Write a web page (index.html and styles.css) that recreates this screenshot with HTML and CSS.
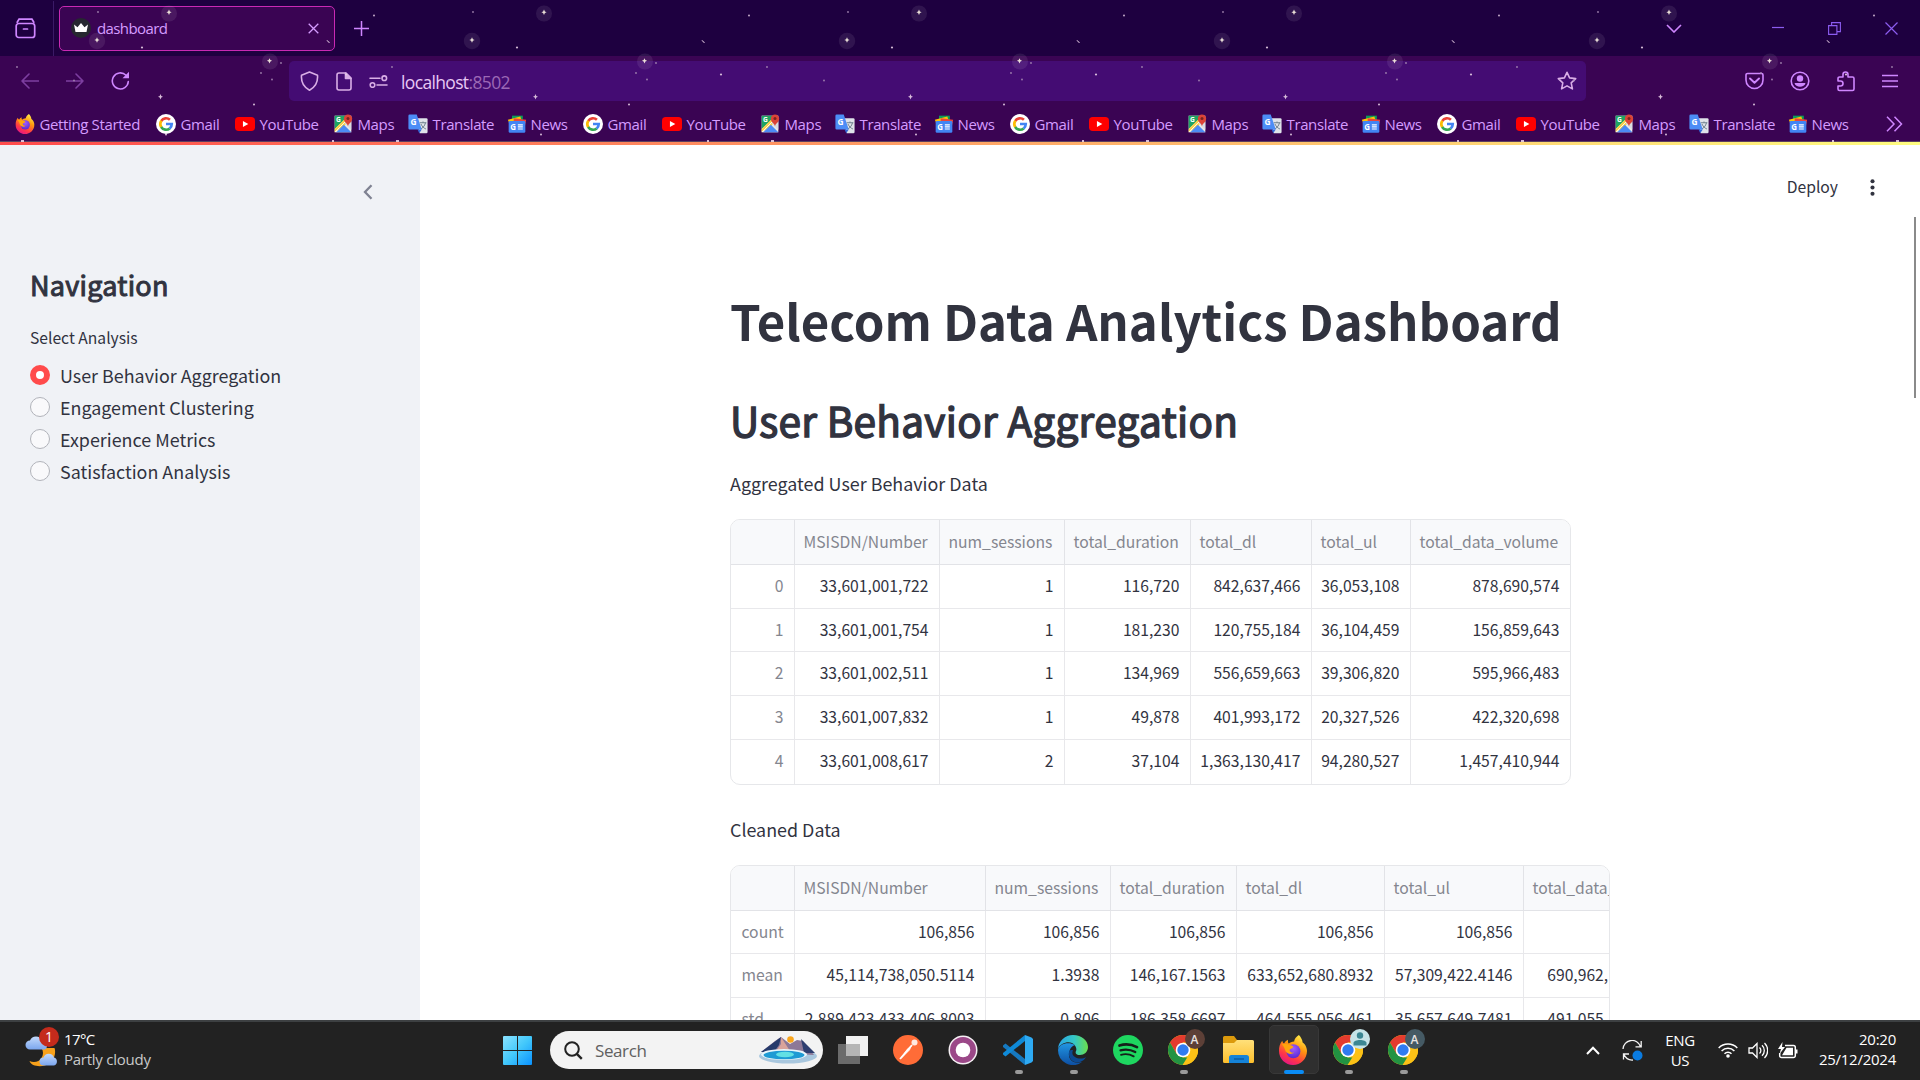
FILE: index.html
```html
<!DOCTYPE html>
<html lang="en">
<head>
<meta charset="utf-8">
<title>dashboard</title>
<link rel="stylesheet" href="styles.css">
</head>
<body>
<svg class="defs" width="0" height="0" aria-hidden="true">
  <defs>
    <linearGradient id="flame" x1="0.8" y1="0" x2="0.3" y2="1"><stop offset="0" stop-color="#fff44f"/><stop offset=".4" stop-color="#ff980e"/><stop offset=".75" stop-color="#ff3647"/><stop offset="1" stop-color="#e31587"/></linearGradient>
    <radialGradient id="globe" cx=".5" cy=".3" r=".7"><stop offset="0" stop-color="#a05bff"/><stop offset="1" stop-color="#5a2bd0"/></radialGradient>
    <linearGradient id="win" x1="0" y1="0" x2="1" y2="1"><stop offset="0" stop-color="#8be3ff"/><stop offset=".5" stop-color="#43c8fb"/><stop offset="1" stop-color="#0a92ff"/></linearGradient>
    <linearGradient id="edgeA" x1="0" y1=".4" x2="1" y2=".4"><stop offset="0" stop-color="#2aa5e6"/><stop offset=".55" stop-color="#35c8c5"/><stop offset="1" stop-color="#6be04b"/></linearGradient>
    <linearGradient id="edgeB" x1="0" y1="0" x2="0" y2="1"><stop offset="0" stop-color="#2196e3"/><stop offset="1" stop-color="#0d4fa3"/></linearGradient>
    <linearGradient id="fold" x1="0" y1="0" x2="0" y2="1"><stop offset="0" stop-color="#ffe07a"/><stop offset="1" stop-color="#fdbf2c"/></linearGradient>
    <linearGradient id="cloud" x1="0" y1="0" x2="0" y2="1"><stop offset="0" stop-color="#c3dafc"/><stop offset="1" stop-color="#7ba6ee"/></linearGradient>
    <pattern id="sky" width="375" height="142" patternUnits="userSpaceOnUse">
      <g fill="#ffffff" fill-opacity=".09"><circle cx="169" cy="13.5" r="8"/><circle cx="97" cy="41" r="8.2"/><circle cx="270" cy="61.500" r="8"/></g>
      <g fill="#fff6e6"><path d="M169 9.500l.9 2 1.700.8-1.700.8-.9 2-.9-2-1.700-.8 1.700-.8zM97 37.200l.9 2 1.700.8-1.700.8-.9 2-.9-2-1.700-.8 1.700-.8zM269.500 58.200l.9 1.800 1.700.8-1.700.8-.9 1.800-.9-1.800-1.700-.8 1.700-.8z"/></g>
      <g fill="#e7cfe6"><path d="M160.500 94l.8 2 1.700.8-1.700.8-.8 2-.8-2-1.700-.8 1.700-.8z"/><circle cx="142" cy="47.500" r="1.100"/><circle cx="374" cy="15.500" r=".9"/><path d="M327 40l3 2.500-1 .5-2.500-2.500z"/><circle cx="254" cy="104.500" r="1"/><circle cx="166" cy="134.500" r="1"/><circle cx="346" cy="74.500" r="1.100"/><rect x="21" y="140" width="3" height="2"/><rect x="332" y="140" width="2" height="2"/></g>
      <g fill="#a98bb5"><circle cx="98" cy="12" r=".9"/><circle cx="281" cy="63" r=".9"/><circle cx="17" cy="67" r=".9"/><circle cx="261" cy="73" r=".9"/><circle cx="272" cy="79.500" r=".9"/><circle cx="74" cy="80.500" r=".9"/></g>
    </pattern>
    <symbol id="firefox" viewBox="0 0 24 24"><path d="M22.500 9.500c-.5-1.600-1.800-3-2.800-3.600-.2-2.200-1.500-4.300-3-5.900-2.300 1.400-3.600 3.500-3.800 5.200-1.900.2-3.300.8-4.200 1.600-.8-.5-.9-1.500-.7-3-1.500.7-2.400 1.700-3 2.700-.6 0-1.300-.4-1.600-2C1.500 6.800.7 9.600.8 12.800.8 19 5.900 24 12 24s11.200-4.900 11.200-11.200c0-1.200-.3-2.300-.7-3.300z" fill="url(#flame)"/><circle cx="12.300" cy="13" r="5.600" fill="url(#globe)"/><path d="M3 7.500c2-.6 4.500-.4 6 .4 2 .2 3 .8 3.300 1.600-.5 1-2.300 1.200-3 2.200-.2 1.500 1.500 2.800 3.500 2.300-1.500 1.800-5 1.500-6.600-.8C5.300 11 5 9 3 7.500z" fill="#ffa50c"/></symbol>
    <symbol id="google" viewBox="0 0 24 24"><circle cx="12" cy="12" r="12" fill="#fff"/><g fill="none" stroke-width="3.200"><path d="M6.300 8.300A6.800 6.800 0 0 1 16.700 7" stroke="#ea4335"/><path d="M6.400 16A7 7 0 0 1 6.400 8.200" stroke="#fbbc05"/><path d="M16.500 17.300A6.900 6.900 0 0 1 6.200 15.600" stroke="#34a853"/><path d="M12 12h6.900a7 7 0 0 1-2.500 5.300" stroke="#4285f4"/></g></symbol>
    <symbol id="youtube" viewBox="0 0 24 24"><rect y="3.500" width="24" height="17" rx="4.500" fill="#f00"/><path d="M9.500 8.300v7.400L16 12z" fill="#fff"/></symbol>
    <symbol id="maps" viewBox="0 0 24 24"><path d="M2 2h20v20H2z" fill="#e8e8e8"/><path d="M2 2h17L2 18z" fill="#1fa463"/><path d="M2 22V18L18 2h3L14 14z" fill="#fbd14a"/><path d="M4 22l9-9 9 9z" fill="#4c8bf5"/><path d="M13 10l9 9V9z" fill="#d8dce2"/><path d="M2.500 21.500L19 5" stroke="#fff" stroke-width="1"/><text x="3.500" y="10" font-size="8" font-weight="700" fill="#fff" class="glyph">G</text><path d="M18 15c-.6-4-5-4.500-5-9.500a5 5 0 0 1 10 0c0 5-4.400 5.500-5 9.500z" fill="#db4437"/><circle cx="18" cy="5.500" r="1.800" fill="#7b231e"/></symbol>
    <symbol id="translate" viewBox="0 0 24 24"><path d="M10 5h12a1.500 1.500 0 0 1 1.500 1.500v15A1.500 1.500 0 0 1 22 23H14z" fill="#dfe3ea"/><path d="M14 10.500h8M18 9v1.500M21 10.500c-1 4-3.500 6.500-6 7.500M15.500 12c1.500 3 3.500 5 6 6" fill="none" stroke="#6d7f8d" stroke-width="1.200"/><path d="M11.500 18.500l5 0L13.500 23z" fill="#3367d6"/><path d="M2 .5h8.500L16.500 18.500H2A1.500 1.500 0 0 1 .5 17V2A1.500 1.500 0 0 1 2 .5z" fill="#4c8df6"/><text x="3" y="12.800" font-size="10" font-weight="700" fill="#fff" class="glyph">G</text></symbol>
    <symbol id="news" viewBox="0 0 24 24"><path d="M6 2h13v8H6z" fill="#0c9d58"/><path d="M1 7l15-4 2 7L4 14z" fill="#ffc107"/><path d="M8 5l15 2-2 10-13-2z" fill="#e8453c"/><rect x="2" y="8.500" width="20" height="14" rx="1.500" fill="#4285f4"/><text x="4" y="19" font-size="9.500" font-weight="700" fill="#fff" class="glyph">G</text><path d="M13 13h6M13 15.500h6M13 18h6" stroke="#fff" stroke-width="1.400"/></symbol>
    <symbol id="chrome" viewBox="0 0 30 30"><circle cx="15" cy="15" r="15" fill="#fbc116"/><path d="M15 0a15 15 0 0 1 13 7.500H15L8.500 18.700 2 7.500A15 15 0 0 1 15 0z" fill="#e33b2e"/><path d="M2 7.500l6.500 11.300h0L15 22.500h6.500L14.500 30A15 15 0 0 1 2 7.500z" fill="#229342"/><path d="M15 7.500h13A15 15 0 0 1 14.600 30l6.900-11.300z" fill="#fbc116"/><circle cx="15" cy="15" r="7.300" fill="#fff"/><circle cx="15" cy="15" r="5.700" fill="#2f7bf0"/></symbol>
  </defs>
</svg>

<header class="browser">
  <div class="tabstrip">
    <svg class="view-icon" width="21" height="21" viewBox="0 0 21 21" fill="none" stroke="#cf86ff" stroke-width="1.700" stroke-linecap="round"><path d="M4 1.200h13M2.200 4.200l1.800-3M18.800 4.200L17 1.200" /><rect x="1.200" y="5.500" width="18.500" height="14" rx="2.500"/><path d="M8.500 11h4"/></svg>
    <div class="tab">
      <svg width="20" height="20" viewBox="0 0 20 20"><circle cx="10" cy="10" r="10" fill="#262730"/><path d="M3 6.500l3.500 2.700L10 5l3.500 4.200L17 6.500 15.500 14h-11z" fill="#fff"/></svg>
      <span class="tab-title">dashboard</span>
      <svg width="11" height="11" viewBox="0 0 11 11" stroke="#d59cff" stroke-width="1.300"><path d="M.7.700l9.600 9.600M10.300.700L.700 10.300"/></svg>
    </div>
    <svg class="new-tab" width="15" height="15" viewBox="0 0 15 15" stroke="#cf86ff" stroke-width="1.500"><path d="M7.500 0v15M0 7.500h15"/></svg>
    <div class="window-controls">
      <svg width="16" height="9" viewBox="0 0 16 9" fill="none" stroke="#cf86ff" stroke-width="1.600"><path d="M1 1l7 7 7-7"/></svg>
      <svg class="min" width="12" height="13" viewBox="0 0 12 13" stroke="#8c5cf0" stroke-width="1.200"><path d="M0 5.500h12"/></svg>
      <svg class="restore" width="13" height="13" viewBox="0 0 13 13" fill="none" stroke="#8c5cf0" stroke-width="1.100"><path d="M.6 3.600h8.300v8.800H.6zM3.600 3.600v-3h8.800v9H9"/></svg>
      <svg class="close" width="13" height="13" viewBox="0 0 13 13" stroke="#8c5cf0" stroke-width="1.200"><path d="M.5.500l12 12M12.500.500l-12 12"/></svg>
    </div>
  </div>

  <div class="navbar">
    <div class="nav-buttons">
      <svg class="dim" width="18" height="16" viewBox="0 0 18 16"><path d="M17.500 8H1M8 1L1 8l7 7"/></svg>
      <svg class="dim" width="18" height="16" viewBox="0 0 18 16"><path d="M.5 8H17M10 1l7 7-7 7"/></svg>
      <svg width="20" height="20" viewBox="0 0 20 20"><path d="M17.300 10.500A8 8 0 1 1 15 4.300"/><path d="M18 .8v6.500H11.500z" fill="#cf86ff" stroke="none"/></svg>
    </div>
    <div class="urlbar">
      <svg class="shield" width="19" height="20" viewBox="0 0 19 20"><path d="M9.500 1L17.500 4.200c.6 7-2 12-8 15-6-3-8.600-8-8-15z"/></svg>
      <svg class="doc" width="16" height="19" viewBox="0 0 16 19"><path d="M3 1h7l5 5v10a2 2 0 0 1-2 2H3a2 2 0 0 1-2-2V3a2 2 0 0 1 2-2z"/><path d="M9.500 1v5.500H15z" fill="#d9aee6"/></svg>
      <svg class="perm" width="19" height="13" viewBox="0 0 19 13"><path d="M1 3.200h10M8 10h10"/><circle cx="15.300" cy="3.200" r="2.300"/><circle cx="3.500" cy="10" r="2.300"/></svg>
      <span class="url">localhost<span class="port">:8502</span></span>
      <svg class="star" width="20" height="20" viewBox="0 0 20 20"><path d="M10 1.300l2.600 5.600 6.100.7-4.500 4.200 1.200 6.100L10 14.900l-5.400 3 1.200-6.100L1.300 7.600l6.100-.7z"/></svg>
    </div>
    <div class="nav-tools">
      <svg width="19" height="18" viewBox="0 0 19 18"><path d="M2.500 1.500h14a1.500 1.500 0 0 1 1.500 1.500v5a8.500 8.500 0 0 1-17 0V3a1.500 1.500 0 0 1 1.500-1.500z"/><path d="M5 6.500l4.500 4.200L14 6.500" stroke-width="1.900"/></svg>
      <svg width="20" height="20" viewBox="0 0 20 20"><circle cx="10" cy="10" r="8.800"/><circle cx="10" cy="7.500" r="3.200" fill="#cf86ff" stroke="none"/><path d="M4.500 12h11c-1 5-10 5-11 0z" fill="#cf86ff" stroke="none"/></svg>
      <svg width="18" height="21" viewBox="0 0 18 21"><path d="M6 6V3.500a2.500 2.500 0 0 1 5 0V6h4.500A1.500 1.500 0 0 1 17 7.500V18a1.500 1.500 0 0 1-1.500 1.500h-13A1.500 1.500 0 0 1 1 18v-3h2.500a2.500 2.500 0 0 0 0-5H1V7.500A1.500 1.500 0 0 1 2.500 6z"/></svg>
      <svg width="16" height="14" viewBox="0 0 16 14"><path d="M0 1.500h16M0 7h16M0 12.500h16"/></svg>
    </div>
  </div>

  <nav class="bookmarks">
    <a class="bm bm-start"><svg><use href="#firefox"/></svg>Getting Started</a>
    <a class="bm bm-gmail"><svg><use href="#google"/></svg>Gmail</a><a class="bm bm-youtube"><svg><use href="#youtube"/></svg>YouTube</a><a class="bm bm-maps"><svg><use href="#maps"/></svg>Maps</a><a class="bm bm-translate"><svg><use href="#translate"/></svg>Translate</a><a class="bm bm-news"><svg><use href="#news"/></svg>News</a>
    <a class="bm bm-gmail"><svg><use href="#google"/></svg>Gmail</a><a class="bm bm-youtube"><svg><use href="#youtube"/></svg>YouTube</a><a class="bm bm-maps"><svg><use href="#maps"/></svg>Maps</a><a class="bm bm-translate"><svg><use href="#translate"/></svg>Translate</a><a class="bm bm-news"><svg><use href="#news"/></svg>News</a>
    <a class="bm bm-gmail"><svg><use href="#google"/></svg>Gmail</a><a class="bm bm-youtube"><svg><use href="#youtube"/></svg>YouTube</a><a class="bm bm-maps"><svg><use href="#maps"/></svg>Maps</a><a class="bm bm-translate"><svg><use href="#translate"/></svg>Translate</a><a class="bm bm-news"><svg><use href="#news"/></svg>News</a>
    <a class="bm bm-gmail"><svg><use href="#google"/></svg>Gmail</a><a class="bm bm-youtube"><svg><use href="#youtube"/></svg>YouTube</a><a class="bm bm-maps"><svg><use href="#maps"/></svg>Maps</a><a class="bm bm-translate"><svg><use href="#translate"/></svg>Translate</a><a class="bm bm-news"><svg><use href="#news"/></svg>News</a>
    <svg class="more" width="17" height="16" viewBox="0 0 17 16" fill="none" stroke="#cf86ff" stroke-width="1.500"><path d="M1 .8L8 8l-7 7.200M8.500.8l7 7.200-7 7.200"/></svg>
  </nav>
  <svg class="stars" width="1920" height="142"><rect width="1920" height="142" fill="url(#sky)"/></svg>
</header>
<div class="decoration"></div>

<div class="app">
  <aside class="sidebar">
    <svg class="collapse" width="10" height="16" viewBox="0 0 10 16" fill="none" stroke="#7f8292" stroke-width="2.300"><path d="M8.500 1.200L2 8l6.500 6.800"/></svg>
    <h2 class="side-title">Navigation</h2>
    <p class="side-label">Select Analysis</p>
    <ul class="radios">
      <li><span class="radio on"></span>User Behavior Aggregation</li>
      <li><span class="radio"></span>Engagement Clustering</li>
      <li><span class="radio"></span>Experience Metrics</li>
      <li><span class="radio"></span>Satisfaction Analysis</li>
    </ul>
  </aside>
  <main class="main">
    <div class="toolbar"><span>Deploy</span><svg width="5" height="17" viewBox="0 0 5 17" fill="#31333f"><circle cx="2.500" cy="2.300" r="2.050"/><circle cx="2.500" cy="8.500" r="2.050"/><circle cx="2.500" cy="14.700" r="2.050"/></svg></div>
    <div class="content">
      <h1 class="title">Telecom Data Analytics Dashboard</h1>
      <h2 class="heading">User Behavior Aggregation</h2>
      <p class="caption">Aggregated User Behavior Data</p>
      <div class="grid grid-agg">
        <div class="row head"><span></span><span>MSISDN/Number</span><span>num_sessions</span><span>total_duration</span><span>total_dl</span><span>total_ul</span><span>total_data_volume</span></div>
        <div class="row"><span>0</span><span>33,601,001,722</span><span>1</span><span>116,720</span><span>842,637,466</span><span>36,053,108</span><span>878,690,574</span></div>
        <div class="row"><span>1</span><span>33,601,001,754</span><span>1</span><span>181,230</span><span>120,755,184</span><span>36,104,459</span><span>156,859,643</span></div>
        <div class="row"><span>2</span><span>33,601,002,511</span><span>1</span><span>134,969</span><span>556,659,663</span><span>39,306,820</span><span>595,966,483</span></div>
        <div class="row"><span>3</span><span>33,601,007,832</span><span>1</span><span>49,878</span><span>401,993,172</span><span>20,327,526</span><span>422,320,698</span></div>
        <div class="row"><span>4</span><span>33,601,008,617</span><span>2</span><span>37,104</span><span>1,363,130,417</span><span>94,280,527</span><span>1,457,410,944</span></div>
      </div>
      <p class="caption">Cleaned Data</p>
      <div class="grid grid-clean">
        <div class="row head"><span></span><span>MSISDN/Number</span><span>num_sessions</span><span>total_duration</span><span>total_dl</span><span>total_ul</span><span>total_data_volume</span></div>
        <div class="row"><span>count</span><span>106,856</span><span>106,856</span><span>106,856</span><span>106,856</span><span>106,856</span><span>106,856</span></div>
        <div class="row"><span>mean</span><span>45,114,738,050.5114</span><span>1.3938</span><span>146,167.1563</span><span>633,652,680.8932</span><span>57,309,422.4146</span><span>690,962,103.3078</span></div>
        <div class="row"><span>std</span><span>2,889,423,433,406.8003</span><span>0.806</span><span>186,358.6697</span><span>464,555,056.461</span><span>35,657,649.7481</span><span>491,055,513.8236</span></div>
      </div>
    </div>
    <div class="scroll-thumb"></div>
  </main>
</div>

<footer class="taskbar">
  <div class="weather">
    <svg width="36" height="38" viewBox="0 0 36 38"><path d="M6.500 30c4 2 10 1 12-3 2-3 2-7 0-10h13c2 5-1 13-5 15-6 5-18 4-20-2z" fill="#f7a11b"/><path d="M7 18.500a4.500 4.500 0 0 1 0-9 6.500 6.500 0 0 1 12 0 5 5 0 0 1 3 9z" fill="url(#cloud)"/><path d="M20.500 34.500a4 4 0 0 1 0-8 5.500 5.500 0 0 1 10.500 0 4.200 4.200 0 0 1 0 8z" fill="url(#cloud)"/></svg>
    <span class="badge">1</span>
    <div class="weather-text"><span class="temp">17°C</span><span>Partly cloudy</span></div>
  </div>
  <svg class="start" width="29" height="29" viewBox="0 0 29 29" fill="url(#win)"><path d="M1 0h13v14H0V1a1 1 0 0 1 1-1zM15 0h13a1 1 0 0 1 1 1v13H15zM0 15h14v14H1a1 1 0 0 1-1-1zM15 15h14v13a1 1 0 0 1-1 1H15z"/></svg>
  <div class="search">
    <svg width="19" height="19" viewBox="0 0 19 19" fill="none" stroke="#222" stroke-width="2"><circle cx="8" cy="8" r="6.800"/><path d="M12.800 12.800l5 5" stroke-width="2.400"/></svg>
    <span>Search</span>
    <svg class="scene" width="60" height="28" viewBox="0 0 60 28"><ellipse cx="30" cy="20" rx="29" ry="7.500" fill="#a9c7de"/><path d="M3 16L17 5l6-4 9 7 7-4 6 1 11 14z" fill="#8d7897"/><path d="M3 16L15 7l8-6-2 8-5 7z" fill="#263a6b"/><path d="M23 1l9 14H18l5-7z" fill="#d9a39b"/><path d="M43 3l14 14H46z" fill="#2e3f70"/><ellipse cx="26" cy="18.500" rx="23" ry="5.500" fill="#e8f5fb"/><ellipse cx="26" cy="19" rx="20.500" ry="4.300" fill="#1f9bd4"/><ellipse cx="27" cy="18.500" rx="9" ry="2.800" fill="#62e0e4"/><circle cx="32.500" cy="3.500" r="3.300" fill="#f9a51b"/></svg>
  </div>
  <div class="apps">
    <div class="app-slot"><svg width="30" height="30" viewBox="0 0 30 30"><rect x="8" y="1" width="22" height="20" fill="#f1f1f1"/><rect x="0" y="9" width="22" height="20" fill="#6b6b6b"/><rect x="8" y="9" width="14" height="12" fill="#b5b5b5"/></svg></div>
    <div class="app-slot"><svg width="30" height="30" viewBox="0 0 30 30"><circle cx="15" cy="15" r="15" fill="#ff6c37"/><path d="M7 24l7-10 5-4-2 5-8 8z" fill="#fff" fill-opacity=".85"/><path d="M7 24L19 10" stroke="#fff" stroke-width="1.800"/><circle cx="21.500" cy="7.500" r="3" fill="#ffe9e0"/></svg></div>
    <div class="app-slot"><svg width="30" height="30" viewBox="0 0 30 30"><circle cx="15" cy="15" r="14.500" fill="#f6f0f4"/><circle cx="15" cy="15" r="13" fill="#9b4888"/><circle cx="15" cy="15" r="7.300" fill="#fff"/></svg></div>
    <div class="app-slot run"><svg width="30" height="30" viewBox="0 0 30 30"><path d="M0 10.500l2.500-2L22 24v6L0 12z" fill="#1679c0"/><path d="M0 19.500l2.500 2L22 6V0L0 18z" fill="#0f8ad8"/><path d="M22 0l6.500 2.500L30 4v22l-1.500 1.500L22 30z" fill="#2eaaf3"/></svg></div>
    <div class="app-slot run"><svg width="30" height="30" viewBox="0 0 30 30"><path d="M0 15a15 15 0 0 0 24 12c-9 3-14-3-13-9 1-5 3-7 6-8C10 6 1 9 0 15z" fill="url(#edgeB)"/><path d="M0 14A15 15 0 0 1 15 0c9 0 15 6 15 12 0 5-4 8-8 8s-5-2-4-4c1-2 0-6-4-8S2 8 0 14z" fill="url(#edgeA)"/><path d="M11 17c-1 6 4 12 11 10 3-1 5-3 6-5-3 2-8 2-11 0s-3-4-2-7c-2 0-3.500 0-4 2z" fill="#0c4a93"/></svg></div>
    <div class="app-slot"><svg width="30" height="30" viewBox="0 0 30 30"><circle cx="15" cy="15" r="15" fill="#1ed760"/><g fill="none" stroke="#15201a" stroke-linecap="round"><path d="M6.500 10.500c6-1.800 12-1.200 17.500 1.600" stroke-width="2.700"/><path d="M7.500 15.300c5-1.400 10-.9 14.800 1.700" stroke-width="2.300"/><path d="M8 19.800c4.500-1.200 8.500-.8 12.700 1.500" stroke-width="1.900"/></g></svg></div>
    <div class="app-slot run"><svg width="30" height="30"><use href="#chrome"/></svg><span class="profile brown">A</span></div>
    <div class="app-slot"><svg width="31" height="28" viewBox="0 0 31 28"><path d="M1.500 0H11l3 4H29v8H0V1.500A1.500 1.500 0 0 1 1.500 0z" fill="#dc9a0c"/><path d="M0 7h11l3-3h15.500A1.500 1.500 0 0 1 31 5.500v20a1.500 1.500 0 0 1-1.500 1.500h-28A1.500 1.500 0 0 1 0 25.500z" fill="url(#fold)"/><path d="M6 27v-5.500a2.500 2.500 0 0 1 2.500-2.500h15a2.500 2.500 0 0 1 2.500 2.500V27z" fill="#1583d8"/><path d="M11 23h10" stroke="#0b5ca5" stroke-width="1.500"/></svg></div>
    <div class="app-slot run active"><svg width="30" height="30"><use href="#firefox"/></svg></div>
    <div class="app-slot run"><svg width="30" height="30"><use href="#chrome"/></svg><span class="profile pale"><svg width="14" height="14" viewBox="0 0 14 14" fill="#3b8793"><circle cx="7" cy="3.500" r="3.200"/><path d="M.5 13.500V11c0-4 13-4 13 0v2.500z"/></svg></span></div>
    <div class="app-slot run"><svg width="30" height="30"><use href="#chrome"/></svg><span class="profile slate">A</span></div>
  </div>
  <div class="tray">
    <svg class="caret" width="14" height="9" viewBox="0 0 14 9" fill="none" stroke="#fff" stroke-width="2"><path d="M1 8l6-6.300L13 8"/></svg>
    <svg class="sync" width="21" height="21" viewBox="0 0 21 21" fill="none" stroke="#f2f2f2" stroke-width="1.300"><path d="M1 9a9 9 0 0 1 17.500-2.500M19.200 1v5.800H13.500M1.500 19.500v-5.500h5.500M2 14.500A9 9 0 0 0 11 20"/><circle cx="15.500" cy="15.500" r="5" fill="#0a7be0" stroke="none"/></svg>
    <span class="lang">ENG<br>US</span>
    <svg class="wifi" width="20" height="16" viewBox="0 0 20 16" fill="none" stroke="#fff" stroke-width="1.500"><path d="M.7 6a13 13 0 0 1 18.600 0M3.600 9a9 9 0 0 1 12.800 0M6.500 11.800a5 5 0 0 1 7 0"/><circle cx="10" cy="14" r="1.800" fill="#fff" stroke="none"/></svg>
    <svg class="vol" width="20" height="17" viewBox="0 0 20 17" fill="none" stroke="#fff" stroke-width="1.300"><path d="M1 6h3.500L9 1.500v14L4.500 11H1zM11.500 5.500a4 4 0 0 1 0 6M14 3.300a7 7 0 0 1 0 10.400M16.500 1a10.500 10.500 0 0 1 0 15"/></svg>
    <svg class="bat" width="20" height="17" viewBox="0 0 20 17"><path d="M7 3.500h8.500A1.800 1.800 0 0 1 17.300 5.300v8.400a1.800 1.800 0 0 1-1.800 1.800h-12a1.800 1.800 0 0 1-1.800-1.800V11" fill="none" stroke="#fff" stroke-width="1.500"/><path d="M18 7.500h1.500v4H18zM8.500 5.800H15v7.500H4z" fill="#fff"/><path d="M4.500 0L0 7h3L1.500 12 7 5H4z" fill="#fff"/></svg>
    <span class="clock">20:20<br>25/12/2024</span>
  </div>
</footer>
</body>
</html>
```
FILE: styles.css
```css
* { box-sizing: border-box; }

body {
  margin: 0;
  width: 1920px;
  height: 1080px;
  overflow: hidden;
  display: flex;
  flex-direction: column;
  background: #fff;
  font-family: "Noto Sans CJK JP", "Noto Sans", sans-serif;
  color: #31333f;
}

h1, h2, p, ul { margin: 0; padding: 0; }
svg { display: block; flex: none; }
.defs { position: absolute; }
.glyph { font-family: "Open Sans", sans-serif; }

/* Browser chrome */
.browser {
  position: relative;
  flex: none;
  height: 142px;
  background: #3a0453;
  border-bottom: 1px solid #5b4060;
  font-family: "Open Sans", sans-serif;
  color: #d59cff;
}
.stars { position: absolute; left: 0; top: 0; pointer-events: none; opacity: .9; }

.tabstrip {
  height: 56px;
  background: #1e0040;
  display: flex;
  align-items: center;
}
.view-icon { margin-left: 15px; }
.tab {
  margin-left: 23px;
  width: 276px;
  height: 45px;
  border: 1px solid #c929b4;
  border-radius: 5px;
  background: #3a0453;
  display: flex;
  align-items: center;
  padding: 0 15px 0 11px;
  gap: 6px;
  position: relative;
}
.tab::before {
  content: "";
  position: absolute;
  left: -7px;
  top: -6px;
  width: 1px;
  height: 55px;
  background: #3b1a66;
}
.tab-title { flex: 1; font-size: 15px; letter-spacing: -0.6px; }
.new-tab { margin-left: 19px; }
.window-controls {
  margin-left: auto;
  padding-right: 22px;
  display: flex;
  align-items: center;
}
.window-controls .min { margin-left: 90px; }
.window-controls .restore { margin-left: 44px; }
.window-controls .close { margin-left: 44px; }

.navbar { height: 50px; display: flex; align-items: center; }
.navbar svg { fill: none; stroke: #cf86ff; stroke-width: 1.6; stroke-linejoin: round; stroke-linecap: round; }
.nav-buttons { width: 289px; padding-left: 21px; display: flex; align-items: center; gap: 27px; }
.nav-buttons .dim { opacity: .45; }
.urlbar {
  width: 1297px;
  height: 40px;
  border-radius: 5px;
  background: #440c73;
  display: flex;
  align-items: center;
  padding: 0 9px 0 11px;
}
.urlbar svg { stroke: #d9aee6; }
.urlbar .doc { margin-left: 17px; }
.urlbar .perm { margin-left: 17px; }
.url { flex: 1; margin-left: 13px; font-size: 17.500px; letter-spacing: -0.650px; color: #e8c8f5; padding-top: 2px; }
.port { color: #9c68b5; }
.nav-tools { margin-left: auto; padding-right: 22px; display: flex; align-items: center; gap: 27px; }
.nav-tools svg:first-child { margin-right: -1px; }

.bookmarks { height: 35px; padding-left: 15px; display: flex; align-items: center; padding-top: 1px; }
.bm {
  flex: none;
  display: flex;
  align-items: center;
  gap: 4.500px;
  font-size: 15px;
  letter-spacing: -0.370px;
  white-space: nowrap;
}
.bm svg { width: 20px; height: 20px; }
.bm-start { width: 141px; }
.bm-gmail { width: 79px; }
.bm-youtube { width: 98px; }
.bm-maps { width: 75px; }
.bm-translate { width: 100px; }
.bm-news { width: 75px; }
.bm-news svg { margin: 0 -1px; }
.more { margin-left: 22px; }

.decoration { flex: none; height: 3px; background: linear-gradient(90deg, #ff4b4b, #fffd80); }

/* Application */
.app { height: 875px; flex: none; display: flex; overflow: hidden; }

.sidebar { width: 420px; background: #f0f2f6; padding: 39px 30px 0; }
.collapse { margin-left: 333px; }
/* Semi-bold look: regular weight thickened with an outline */
.side-title {
  margin-top: 62px;
  font-size: 27px;
  line-height: 46px;
  font-weight: 400;
  letter-spacing: .25px;
  -webkit-text-stroke: 1px #31333f;
}
.side-label { margin-top: 16px; font-size: 15.650px; line-height: 28px; }
.radios { list-style: none; margin-top: 8px; }
.radios li { height: 32px; display: flex; gap: 10px; font-size: 17.900px; line-height: 30px; }
.radio { width: 20px; height: 20px; margin-top: 5px; border-radius: 50%; border: 1px solid #b1b3ba; background: #f9f9fb; }
.radio.on { border: 6px solid #ff4b4b; background: #fff; }

.main { width: 1500px; position: relative; }
.toolbar { height: 84px; padding-right: 45px; display: flex; justify-content: flex-end; align-items: center; gap: 32px; font-size: 15.700px; }
.toolbar span { margin-top: -2px; }
.scroll-thumb { position: absolute; right: 4px; top: 72px; width: 2px; height: 181px; background: #8a8a8a; }
.content { width: 880px; margin-left: 310px; padding-top: 58px; }
.title { font-size: 49.150px; line-height: 66px; font-weight: 700; white-space: nowrap; }
.heading {
  margin-top: 40px;
  font-size: 40.500px;
  line-height: 54px;
  font-weight: 400;
  letter-spacing: .3px;
  white-space: nowrap;
  -webkit-text-stroke: 1.400px #31333f;
}
.caption { margin-top: 20px; font-size: 17.900px; line-height: 32px; }

.grid {
  margin-top: 20px;
  border: 1px solid #e6e7ea;
  border-radius: 10px;
  overflow: hidden;
  font-size: 15.700px;
}
.row { display: grid; height: 43.800px; line-height: 42px; }
.row span {
  border-right: 1px solid #e8e8eb;
  border-bottom: 1px solid #e8e8eb;
  padding: 0 10.500px 0 0;
  text-align: right;
  white-space: nowrap;
}
.row span:first-child { color: #84868f; }
.row span:last-child { border-right: 0; }
.row.head { height: 44.800px; line-height: 43px; }
.row.head span { text-align: left; padding: 0 0 0 8.500px; background: #f8f9fb; color: #84868f; border-color: #e2e3e7; }
.row:last-child span { border-bottom: 0; }
.grid-agg { width: 841px; }
.grid-agg .row { grid-template-columns: 64px 145px 125px 126px 121px 99px 159px; }
.grid-clean { width: 880px; }
.grid-clean .row { grid-template-columns: 64px 191px 125px 126px 148px 139px 160px; }
.grid-clean .row span:first-child { text-align: left; padding-left: 10.500px; }
.grid-agg + .caption { margin-top: 28px; }

/* Taskbar */
.taskbar {
  position: relative;
  flex: none;
  height: 60px;
  background: #222;
  border-top: 2px solid #3d4042;
  padding-bottom: 2px;
  display: flex;
  align-items: center;
  font-family: "Open Sans", sans-serif;
  font-size: 15px;
  color: #fff;
}
.weather { position: relative; width: 503px; padding-left: 23px; display: flex; align-items: center; gap: 5px; }
.badge {
  position: absolute;
  left: 39px;
  top: -4px;
  width: 20px;
  height: 20px;
  border-radius: 50%;
  background: #c42b1c;
  font-size: 14px;
  line-height: 20px;
  text-align: center;
}
.weather-text { margin-top: -2px; display: flex; flex-direction: column; line-height: 20px; letter-spacing: -0.250px; color: #c9c9c9; }
.temp { color: #fff; letter-spacing: -0.6px; }
.start { margin-right: 18px; }
.search {
  width: 273px;
  height: 38px;
  border-radius: 19px;
  background: #f3f3f3;
  display: flex;
  align-items: center;
  padding: 0 5px 0 14px;
  color: #606060;
  font-size: 17px;
  letter-spacing: -0.4px;
}
.search span { flex: 1; margin-left: 12px; }
.apps { margin-left: 2.500px; display: flex; height: 100%; }
.app-slot { position: relative; width: 55px; display: flex; align-items: center; justify-content: center; }
.run::after {
  content: "";
  position: absolute;
  bottom: 4px;
  left: 24px;
  width: 8px;
  height: 4px;
  border-radius: 2px;
  background: #9a9a9a;
}
.active::before {
  content: "";
  position: absolute;
  inset: 3px 2px 4px 3px;
  border-radius: 5px;
  background: #2f2f2f;
  border: 1px solid #383838;
}
.active svg { position: relative; }
.active::after { left: 18px; width: 20px; background: #0a8cf5; }
.profile {
  position: absolute;
  left: 29px;
  top: 7px;
  width: 20px;
  height: 20px;
  border-radius: 50%;
  display: flex;
  align-items: center;
  justify-content: center;
  font-size: 12px;
  font-weight: 600;
  color: #e8e4e2;
}
.brown { background: #5d4037; }
.slate { background: #455a64; }
.pale { background: #c6e4e8; }

.tray { margin-left: auto; padding-right: 24px; display: flex; align-items: center; line-height: 20px; letter-spacing: -0.4px; }
.sync { margin-left: 22px; }
.lang { margin-left: 20px; width: 34px; text-align: center; }
.wifi { margin-left: 21px; }
.vol, .bat { margin-left: 10px; }
.clock { margin-left: 10px; margin-top: -2px; width: 88px; text-align: right; white-space: nowrap; letter-spacing: -0.250px; }
```
